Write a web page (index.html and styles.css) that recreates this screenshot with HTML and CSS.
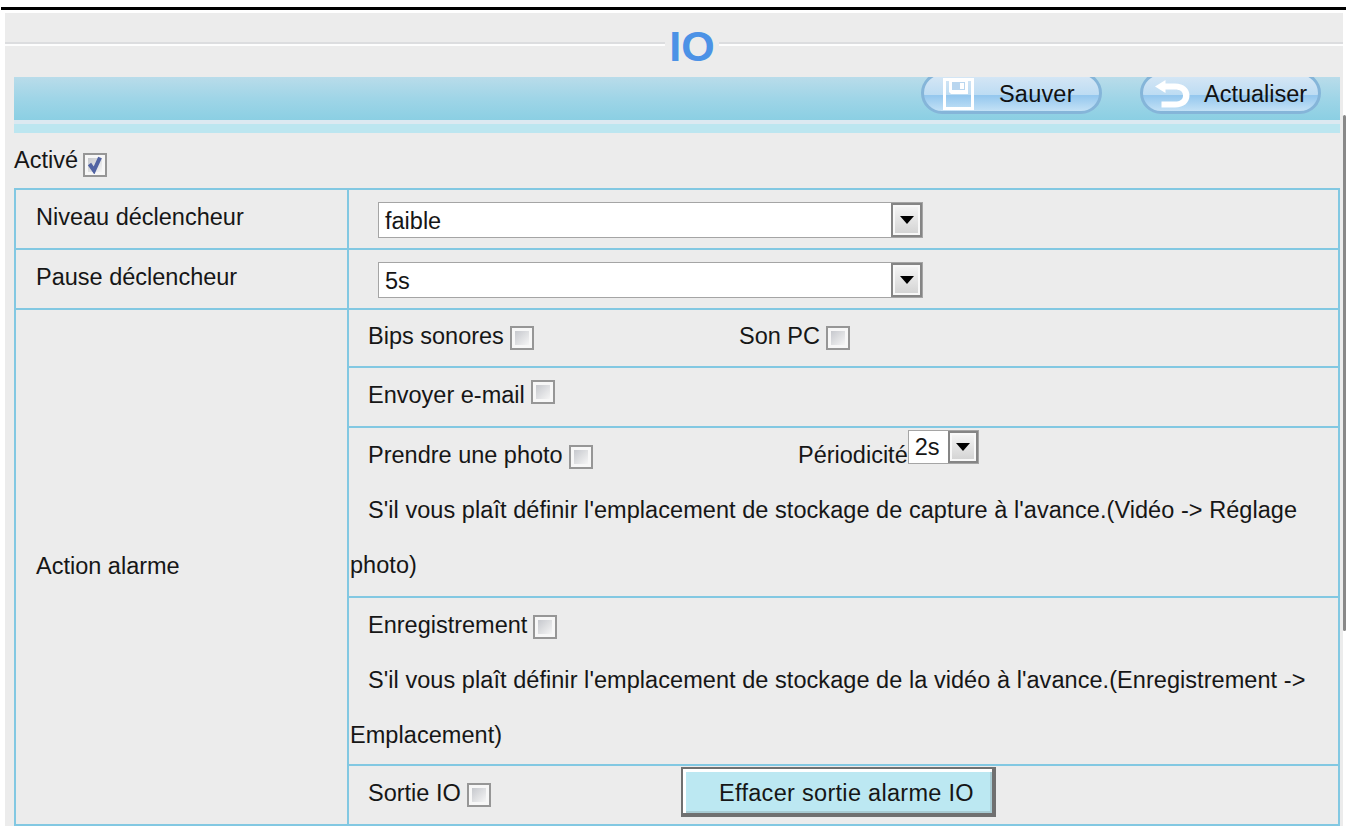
FILE: index.html
```
<!DOCTYPE html>
<html lang="fr">

<head>
	<meta charset="utf-8">
	<title>IO</title>
	<link rel="stylesheet" href="styles.css">
</head>

<body>
	<div class="page">
		<div class="panel">
			<div class="title"><h1>IO</h1></div>
			<div class="toolbar">
				<button class="pill">
					<svg class="disk" width="31" height="32" viewBox="0 0 31 32">
						<path d="M1.5 1.5h28v29h-28z" fill="none" stroke="#fff" stroke-width="3"/>
						<path d="M6 1h19v15H8l-2-2z" fill="#fff"/>
						<path d="M9 4h13v8H9z" fill="#b9d6ef"/>
						<path d="M17 5h4v6h-4z" fill="#fff"/>
					</svg>
					<span class="save">Sauver</span>
				</button>
				<button class="pill">
					<svg class="back" width="36" height="29" viewBox="0 0 36 29">
						<path d="M0 6.500L10.500 0v3.500H20c9 0 14.500 5 14.500 12S29 27.500 20 27.500H6.500v-6H20c5 0 8-2 8-6s-3-6-8-6h-9.500v3.500z" fill="#fff"/>
					</svg>
					<span class="refresh">Actualiser</span>
				</button>
			</div>
			<div class="stripe"></div>
			<div class="enable"><span>Activé</span><i class="check on"><svg width="18" height="18" viewBox="0 0 18 18"><path d="M3.500 8l4.500 6.500 6-13" fill="none" stroke="#5163a3" stroke-width="4"/></svg></i></div>

			<div class="settings">
				<div class="name">Niveau déclencheur</div>
				<div class="cell"><div class="select wide"><span>faible</span><b></b></div></div>

				<div class="name">Pause déclencheur</div>
				<div class="cell"><div class="select wide"><span>5s</span><b></b></div></div>

				<div class="name alarm">Action alarme</div>
				<div class="cell">
					<div class="line beep"><div class="first">Bips sonores<i class="check"></i></div>Son PC<i class="check"></i></div>
				</div>
				<div class="cell">
					<div class="line">Envoyer e-mail<i class="check up"></i></div>
				</div>
				<div class="cell">
					<div class="line"><div class="first photo">Prendre une photo<i class="check"></i></div>Périodicité<div class="select small"><span>2s</span><b></b></div></div>
					<p>S'il vous plaît définir l'emplacement de stockage de capture à l'avance.(Vidéo -&gt; Réglage<br>photo)</p>
				</div>
				<div class="cell">
					<div class="line">Enregistrement<i class="check"></i></div>
					<p>S'il vous plaît définir l'emplacement de stockage de la vidéo à l'avance.(Enregistrement -&gt;<br>Emplacement)</p>
				</div>
				<div class="cell">
					<div class="line"><div class="first output">Sortie IO<i class="check"></i></div><button class="clear">Effacer sortie alarme IO</button></div>
				</div>
			</div>
		</div>
		<div class="scroll"></div>
	</div>
</body>

</html>
```

FILE: styles.css
```
* {
	box-sizing: border-box;
}

body {
	margin: 0;
	background: #fff;
	font-family: "Liberation Sans", Arial, sans-serif;
	font-size: 23.5px;
	color: #161616;
}

h1,
p {
	margin: 0;
}

button {
	font: inherit;
	color: inherit;
	white-space: nowrap;
}

.page {
	display: flex;
	height: 826px;
	margin-left: 1px;
	padding: 10px 0 0 4px;
	overflow: hidden;
	background: linear-gradient(#000, #000) 0 7px / 100% 3px no-repeat;
}

.panel {
	width: 1338px;
	height: 813px;
	margin-top: 3px;
	padding: 0 3px 0 9px;
	background: #ececec;
}

.title {
	display: flex;
	justify-content: center;
	height: 64px;
	margin: 0 -3px 0 -9px;
	background: linear-gradient(#dcdddf 2px, #fdfdfd 2px) 0 29px / 100% 4px no-repeat;
}

h1 {
	width: 54px;
	height: 64px;
	margin-left: 36px;
	background: #ececec;
	color: #4c92e6;
	font-size: 43px;
	line-height: 67px;
	text-align: center;
}

.toolbar {
	display: flex;
	justify-content: flex-end;
	gap: 38px;
	height: 43px;
	padding-right: 19px;
	overflow: hidden;
	background: linear-gradient(#b9dcea, #9fd5e7 50%, #8bcfe3);
}

.pill {
	display: flex;
	width: 181px;
	height: 42px;
	margin-top: -5px;
	padding: 0;
	border: 3px solid #85b5d9;
	border-radius: 21px;
	background: linear-gradient(#d6e7f5, #bddcf3 55%, #94c7ee 57%, #c3e1f6);
}

.disk {
	margin: 3px 0 0 19px;
}

.back {
	margin: 5px 0 0 12px;
}

.save,
.refresh {
	line-height: 38px;
	color: #111;
}

.save {
	margin-left: 25px;
	letter-spacing: 0.2px;
}

.refresh {
	margin-left: 13px;
}

.stripe {
	height: 13px;
	border-top: 4px solid #dce9f1;
	background: #bce6f0;
}

.enable {
	display: flex;
	height: 55px;
	line-height: 54px;
}

.check {
	display: flex;
	width: 24px;
	height: 24px;
	margin: 17px 0 0 6px;
	padding: 3px;
	border: 2px solid #969696;
	background: linear-gradient(135deg, #c6c8cd, #f5f5f5) content-box, #f7f7f7;
}

.check svg {
	flex: none;
	margin: -2px;
}

.check.on {
	margin: 20px 0 0 5px;
}

.check.up {
	margin-top: 12px;
}

.settings {
	display: grid;
	grid-template-columns: 333px 991px;
	grid-template-rows: 60px 60px 58px 60px 170px 168px 60px;
	border-left: 2px solid #82c8e2;
	border-top: 2px solid #82c8e2;
	width: 1326px;
}

.name,
.cell {
	border-right: 2px solid #82c8e2;
	border-bottom: 2px solid #82c8e2;
	line-height: 55px;
	white-space: nowrap;
}

.name {
	padding-left: 20px;
}

.alarm {
	grid-row: 3 / 8;
	padding-top: 229px;
}

.line {
	display: flex;
	height: 55px;
	padding-left: 19px;
}

.beep {
	margin-top: -1px;
}

.first {
	display: flex;
	width: 371px;
}

.photo {
	width: 430px;
}

.output {
	width: 313px;
}

p {
	padding-left: 1px;
	text-indent: 18px;
	letter-spacing: 0.055px;
}

.select {
	display: flex;
	border: 1px solid #a5a5a5;
	background: #fff;
}

.select span {
	flex: 1;
	padding-left: 6px;
}

.select b {
	display: flex;
	justify-content: center;
	align-items: center;
	width: 31px;
	border: 2px solid #858585;
	background: linear-gradient(#f6f6f6, #d2d2d2);
	box-shadow: inset 0 0 0 2px #f8f8f8;
}

.select b::before {
	content: "";
	border: 7px solid transparent;
	border-top: 8px solid #000;
	border-bottom: 0;
}

.wide {
	width: 545px;
	height: 36px;
	margin: 12px 0 0 29px;
	line-height: 36px;
}

.small {
	width: 71px;
	height: 34px;
	margin-top: 2px;
	line-height: 32px;
}

.small b {
	width: 30px;
}

.clear {
	width: 315px;
	height: 50px;
	margin-top: 1px;
	padding: 4px 0 0 18px;
	border: 2px solid #707070;
	border-right-width: 4px;
	border-bottom-width: 4px;
	background: #bce8f2;
	box-shadow: inset 4px 4px 0 -1px #fff, inset -2px -2px 0 #a8ccd4;
	letter-spacing: 0.3px;
	line-height: 40px;
}

/* visible part of the scrollbar thumb */
.scroll {
	width: 3px;
	height: 516px;
	margin-top: 105px;
	border-radius: 2px;
	background: #888;
}
```
